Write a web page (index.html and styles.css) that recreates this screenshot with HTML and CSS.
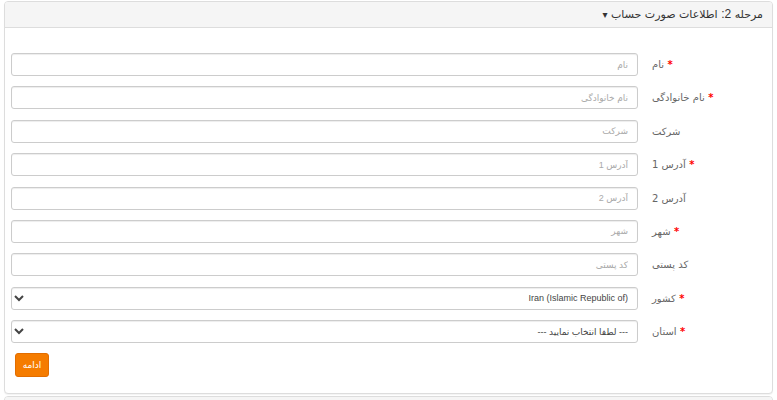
FILE: index.html
```html
<!DOCTYPE html>
<html lang="fa" dir="rtl">
<head>
    <meta charset="UTF-8">
    <meta name="viewport" content="width=device-width, initial-scale=1.0">
    <title>اطلاعات صورت حساب</title>
    <link rel="stylesheet" href="styles.css">
</head>
<body>

<div class="panel">
    <div class="panel-heading">
        مرحله <b>2:</b> اطلاعات صورت حساب <span class="caret">&#9662;</span>
    </div>
    <div class="panel-body">
        <form id="paymentAddress">
            <div class="form-group required">
                <label for="firstname">نام</label>
                <input type="text" id="firstname" placeholder="نام">
            </div>
            <div class="form-group required">
                <label for="lastname">نام خانوادگی</label>
                <input type="text" id="lastname" placeholder="نام خانوادگی">
            </div>
            <div class="form-group">
                <label for="company">شرکت</label>
                <input type="text" id="company" placeholder="شرکت">
            </div>
            <div class="form-group required">
                <label for="address1">آدرس 1</label>
                <input type="text" id="address1" placeholder="آدرس 1">
            </div>
            <div class="form-group">
                <label for="address2">آدرس 2</label>
                <input type="text" id="address2" placeholder="آدرس 2">
            </div>
            <div class="form-group required">
                <label for="city">شهر</label>
                <input type="text" id="city" placeholder="شهر">
            </div>
            <div class="form-group">
                <label for="postcode">کد پستی</label>
                <input type="text" id="postcode" placeholder="کد پستی">
            </div>
            <div class="form-group required">
                <label for="country">کشور</label>
                <select id="country">
                    <option>Iran (Islamic Republic of)</option>
                </select>
            </div>
            <div class="form-group required">
                <label for="zone">استان</label>
                <select id="zone">
                    <option>--- لطفا انتخاب نمایید ---</option>
                </select>
            </div>
            <div class="buttons">
                <button type="button" class="btn-continue">ادامه</button>
            </div>
        </form>
    </div>
</div>

<div class="panel panel-next">
    <div class="panel-heading"></div>
</div>

</body>
</html>
```

FILE: styles.css
```css
body {
    font-family: "DejaVu Sans", Tahoma, sans-serif;
    font-size: 10px;
    margin: 0;
    padding: 1px 4px 0 4px;
    background-color: #fff;
    color: #555;
}

.panel {
    border: 1px solid #ddd;
    border-radius: 4px;
    background: #fff;
    box-shadow: 0 1px 1px rgba(0, 0, 0, 0.05);
}

.panel-heading {
    background-color: #f5f5f5;
    border-bottom: 1px solid #ddd;
    border-radius: 3px 3px 0 0;
    height: 25px;
    line-height: 25px;
    padding: 0 9px;
    font-size: 11px;
    color: #333;
}

.panel-heading b {
    font-weight: normal;
    font-family: "Liberation Sans", sans-serif;
    font-size: 12px;
}

.caret {
    font-size: 10px;
}

.panel-body {
    padding: 25px 0 16px 6px;
}

.form-group {
    display: grid;
    grid-template-columns: 134px 1fr;
    align-items: center;
    height: 23px;
    margin-bottom: 10.375px;
}

.form-group label {
    text-align: left;
    padding-left: 14px;
    color: #666;
}

.form-group.required label::before {
    content: "* ";
    color: #f00;
    font-weight: bold;
}

.form-group input,
.form-group select {
    box-sizing: border-box;
    width: 100%;
    height: 23px;
    padding: 0 9px;
    border: 1px solid #ccc;
    border-radius: 3px;
    font-family: "Liberation Sans", "DejaVu Sans", sans-serif;
    font-size: 9px;
    color: #444;
    background: #fff;
    box-shadow: inset 0 1px 1px rgba(0, 0, 0, 0.075);
}

.form-group select {
    padding-right: 5px;
}

.form-group input::placeholder {
    color: #aaa;
}

.buttons {
    display: flex;
    justify-content: flex-end;
    padding-left: 4px;
    margin-top: -0.375px;
}

.btn-continue {
    width: 34px;
    height: 24px;
    padding: 0;
    background-color: #f57c00;
    border: 1px solid #e26d00;
    border-radius: 3px;
    color: #fff;
    font-family: inherit;
    font-size: 9px;
    cursor: pointer;
}

.panel-next {
    margin-top: 2px;
}
```
